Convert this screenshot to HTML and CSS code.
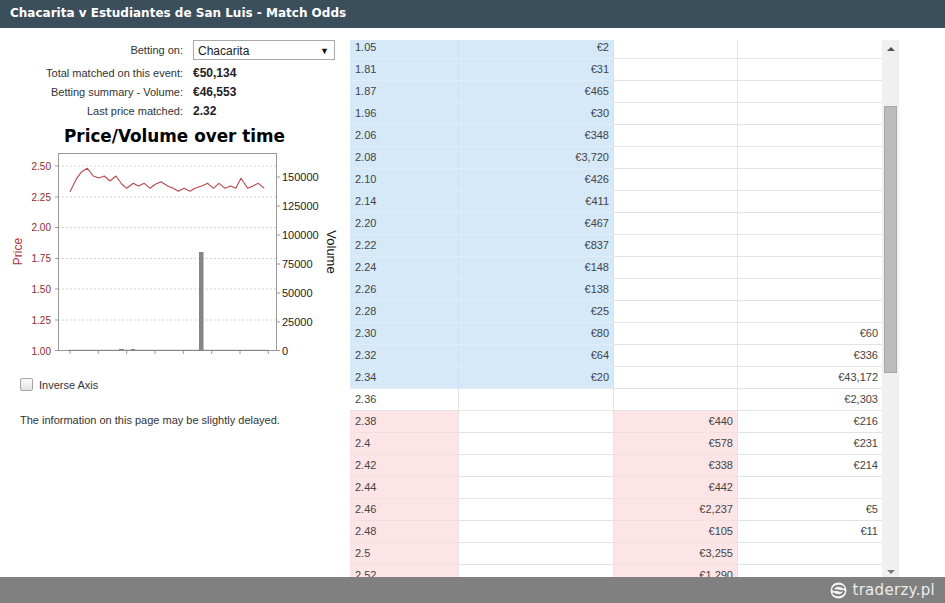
FILE: index.html
```html
<!DOCTYPE html>
<html lang="en">
<head>
<meta charset="utf-8">
<title>Match Odds</title>
<link rel="stylesheet" href="styles.css">
</head>
<body>
<header class="titlebar">Chacarita v Estudiantes de San Luis - Match Odds</header>
<main class="content">
  <section class="left">
    <div class="info">
      <span class="label first">Betting on:</span>
      <div class="select"><span>Chacarita</span><span class="caret">&#9660;</span></div>
      <span class="label">Total matched on this event:</span><span class="value">€50,134</span>
      <span class="label">Betting summary - Volume:</span><span class="value">€46,553</span>
      <span class="label">Last price matched:</span><span class="value">2.32</span>
    </div>
    <svg class="chart" width="350" height="240" viewBox="0 122 350 240" xmlns="http://www.w3.org/2000/svg">
      <text class="chart-title" x="174.5" y="142" text-anchor="middle" textLength="221" lengthAdjust="spacingAndGlyphs">Price/Volume over time</text>
      <g class="grid">
        <line x1="58" y1="166" x2="277" y2="166"/>
        <line x1="58" y1="197" x2="277" y2="197"/>
        <line x1="58" y1="227.5" x2="277" y2="227.5"/>
        <line x1="58" y1="258.5" x2="277" y2="258.5"/>
        <line x1="58" y1="289" x2="277" y2="289"/>
        <line x1="58" y1="320" x2="277" y2="320"/>
      </g>
      <rect class="plot" x="58.5" y="153.5" width="218" height="197"/>
      <g class="ticks">
        <line x1="55" y1="166" x2="58" y2="166"/><line x1="55" y1="197" x2="58" y2="197"/>
        <line x1="55" y1="227.5" x2="58" y2="227.5"/><line x1="55" y1="258.5" x2="58" y2="258.5"/>
        <line x1="55" y1="289" x2="58" y2="289"/><line x1="55" y1="320" x2="58" y2="320"/>
        <line x1="55" y1="350.5" x2="58" y2="350.5"/>
        <line x1="277" y1="177" x2="280" y2="177"/><line x1="277" y1="206" x2="280" y2="206"/>
        <line x1="277" y1="235" x2="280" y2="235"/><line x1="277" y1="264" x2="280" y2="264"/>
        <line x1="277" y1="293" x2="280" y2="293"/><line x1="277" y1="322" x2="280" y2="322"/>
        <line x1="277" y1="350.5" x2="280" y2="350.5"/>
        <line x1="70" y1="351" x2="70" y2="354"/><line x1="98.3" y1="351" x2="98.3" y2="354"/>
        <line x1="126.7" y1="351" x2="126.7" y2="354"/><line x1="155" y1="351" x2="155" y2="354"/>
        <line x1="183.3" y1="351" x2="183.3" y2="354"/><line x1="211.7" y1="351" x2="211.7" y2="354"/>
        <line x1="240" y1="351" x2="240" y2="354"/><line x1="268.3" y1="351" x2="268.3" y2="354"/>
      </g>
      <g class="price-labels" text-anchor="end">
        <text x="51" y="169.5">2.50</text>
        <text x="51" y="200.5">2.25</text>
        <text x="51" y="231">2.00</text>
        <text x="51" y="262">1.75</text>
        <text x="51" y="292.5">1.50</text>
        <text x="51" y="323.5">1.25</text>
        <text x="51" y="354.5">1.00</text>
      </g>
      <g class="volume-labels">
        <text x="282" y="181">150000</text>
        <text x="282" y="210">125000</text>
        <text x="282" y="239">100000</text>
        <text x="282" y="268">75000</text>
        <text x="282" y="297">50000</text>
        <text x="282" y="326">25000</text>
        <text x="282" y="355">0</text>
      </g>
      <text class="axis-price" transform="translate(22 251.5) rotate(-90)" text-anchor="middle">Price</text>
      <text class="axis-volume" transform="translate(327 252) rotate(90)" text-anchor="middle">Volume</text>
      <g class="bars">
        <rect x="68" y="349.8" width="200" height="1.2"/>
        <rect x="119" y="349" width="5" height="2"/>
        <rect x="131" y="349" width="4" height="2"/>
        <rect x="199" y="252" width="4.5" height="99"/>
      </g>
      <polyline class="price-line" points="70,191.7 76.7,178.3 81.7,171.7 87.3,168.3 93.3,176 99,178 104.3,176 110,181 116,176 121.7,184 126.7,188.3 133.3,183.3 138.3,186 144.3,183.3 150,188.3 155.7,184 161,181.7 167.7,186 173.3,188.3 178.3,191.3 184,188.3 190,191.3 195,188.3 201.7,186 207.7,183.3 213.3,188.3 219,183.3 225,188.3 230.7,186 235.7,188.3 241,178.3 247.7,188.3 253,186 258.3,183.3 264.3,188.3"/>
    </svg>
    <label class="inverse"><span class="checkbox"></span>Inverse Axis</label>
    <p class="note">The information on this page may be slightly delayed.</p>
  </section>

  <section class="ladder">
    <div class="viewport">
      <table class="odds">
        <colgroup><col class="c1"><col class="c2"><col class="c3"><col class="c4"></colgroup>
        <tbody>
          <tr class="back"><td>1.05</td><td class="num">€2</td><td></td><td></td></tr>
          <tr class="back"><td>1.81</td><td class="num">€31</td><td></td><td></td></tr>
          <tr class="back"><td>1.87</td><td class="num">€465</td><td></td><td></td></tr>
          <tr class="back"><td>1.96</td><td class="num">€30</td><td></td><td></td></tr>
          <tr class="back"><td>2.06</td><td class="num">€348</td><td></td><td></td></tr>
          <tr class="back"><td>2.08</td><td class="num">€3,720</td><td></td><td></td></tr>
          <tr class="back"><td>2.10</td><td class="num">€426</td><td></td><td></td></tr>
          <tr class="back"><td>2.14</td><td class="num">€411</td><td></td><td></td></tr>
          <tr class="back"><td>2.20</td><td class="num">€467</td><td></td><td></td></tr>
          <tr class="back"><td>2.22</td><td class="num">€837</td><td></td><td></td></tr>
          <tr class="back"><td>2.24</td><td class="num">€148</td><td></td><td></td></tr>
          <tr class="back"><td>2.26</td><td class="num">€138</td><td></td><td></td></tr>
          <tr class="back"><td>2.28</td><td class="num">€25</td><td></td><td></td></tr>
          <tr class="back"><td>2.30</td><td class="num">€80</td><td></td><td class="num">€60</td></tr>
          <tr class="back"><td>2.32</td><td class="num">€64</td><td></td><td class="num">€336</td></tr>
          <tr class="back"><td>2.34</td><td class="num">€20</td><td></td><td class="num">€43,172</td></tr>
          <tr class="mid"><td>2.36</td><td></td><td></td><td class="num">€2,303</td></tr>
          <tr class="lay"><td>2.38</td><td></td><td class="num">€440</td><td class="num">€216</td></tr>
          <tr class="lay"><td>2.4</td><td></td><td class="num">€578</td><td class="num">€231</td></tr>
          <tr class="lay"><td>2.42</td><td></td><td class="num">€338</td><td class="num">€214</td></tr>
          <tr class="lay"><td>2.44</td><td></td><td class="num">€442</td><td></td></tr>
          <tr class="lay"><td>2.46</td><td></td><td class="num">€2,237</td><td class="num">€5</td></tr>
          <tr class="lay"><td>2.48</td><td></td><td class="num">€105</td><td class="num">€11</td></tr>
          <tr class="lay"><td>2.5</td><td></td><td class="num">€3,255</td><td></td></tr>
          <tr class="lay"><td>2.52</td><td></td><td class="num">€1,290</td><td></td></tr>
        </tbody>
      </table>
    </div>
    <div class="scrollbar">
      <div class="sb-btn"><span class="arrow-up"></span></div>
      <div class="sb-track"><div class="sb-thumb"></div></div>
      <div class="sb-btn"><span class="arrow-down"></span></div>
    </div>
  </section>
</main>

<div class="watermark">
  <svg class="wm-logo" width="17" height="17" viewBox="0 0 17 17" xmlns="http://www.w3.org/2000/svg">
    <circle cx="8.5" cy="8.5" r="8" fill="#f2f2f2"/>
    <path d="M3 7.5 C4 3.5, 10 2.5, 13.5 5.5" fill="none" stroke="#7a7a7a" stroke-width="1.8" stroke-linecap="round"/>
    <path d="M14 9.5 C13 13.5, 7 14.5, 3.5 11.5" fill="none" stroke="#7a7a7a" stroke-width="1.8" stroke-linecap="round"/>
    <path d="M4 8.5 C6 6.5, 11 10.5, 13 8.5" fill="none" stroke="#7a7a7a" stroke-width="1.5" stroke-linecap="round"/>
  </svg>
  <span class="wm-text">traderzy.pl</span>
</div>
</body>
</html>
```

FILE: styles.css
```css
html, body {
  margin: 0;
  padding: 0;
}
body {
  width: 945px;
  height: 603px;
  overflow: hidden;
  position: relative;
  background: #ffffff;
  font-family: "Liberation Sans", Arial, sans-serif;
  font-size: 11px;
  color: #333333;
}

.titlebar {
  height: 28px;
  box-sizing: border-box;
  background: #3b4e5c;
  color: #ffffff;
  font-family: "DejaVu Sans", Verdana, sans-serif;
  font-weight: bold;
  font-size: 12px;
  line-height: 27px;
  padding-left: 10px;
}

.content {
  display: flex;
  padding-top: 12px;
}

/* left panel */
.left {
  width: 350px;
  flex: none;
}
.info {
  display: grid;
  grid-template-columns: 183px 142px;
  column-gap: 10px;
  grid-template-rows: 20px 23px 19px 19px;
  align-items: end;
}
.label {
  text-align: right;
  line-height: 19px;
  color: #333;
}
.label.first {
  align-self: center;
  padding-top: 1px;
}
.value {
  font-weight: bold;
  font-size: 12px;
  line-height: 19px;
  color: #222;
}
.select {
  align-self: stretch;
  box-sizing: border-box;
  border: 1px solid #a9a9a9;
  background: #ffffff;
  display: flex;
  align-items: center;
  justify-content: space-between;
  padding: 1px 5px 0 4px;
  font-size: 12px;
  color: #222;
}
.caret {
  font-size: 9px;
  color: #111;
}

.chart {
  display: block;
  margin-top: 1px;
}
.chart-title {
  font-family: "DejaVu Sans", Verdana, sans-serif;
  font-weight: bold;
  font-size: 17px;
  fill: #000;
}
.grid line {
  stroke: #d4d4d4;
  stroke-width: 1;
  stroke-dasharray: 2 2;
}
.plot {
  fill: none;
  stroke: #9a9a9a;
  stroke-width: 1;
}
.ticks line {
  stroke: #9a9a9a;
  stroke-width: 1;
}
.price-labels text {
  font-family: "Liberation Sans", Arial, sans-serif;
  font-size: 10px;
  fill: #8e2b2b;
}
.volume-labels text {
  font-family: "Liberation Sans", Arial, sans-serif;
  font-size: 11px;
  fill: #222;
}
.axis-price {
  font-family: "Liberation Sans", Arial, sans-serif;
  font-size: 12px;
  fill: #b03434;
}
.axis-volume {
  font-family: "Liberation Sans", Arial, sans-serif;
  font-size: 13px;
  fill: #111;
}
.bars rect {
  fill: #858585;
}
.price-line {
  fill: none;
  stroke: #b5474b;
  stroke-width: 1.1;
  stroke-linejoin: round;
}

.inverse {
  display: flex;
  align-items: center;
  gap: 6px;
  margin: 16px 0 0 20px;
  height: 13px;
  color: #333;
}
.checkbox {
  width: 11px;
  height: 11px;
  border: 1px solid #a6a6a6;
  border-radius: 2px;
  background: linear-gradient(#fafafa, #e3e3e3);
}
.note {
  margin: 22px 0 0 20px;
  line-height: 14px;
  color: #333;
}

/* ladder */
.ladder {
  display: flex;
  height: 540px;
}
.viewport {
  width: 532px;
  height: 540px;
  overflow: hidden;
}
.odds {
  margin-top: -3px;
  width: 532px;
  table-layout: fixed;
  border-collapse: separate;
  border-spacing: 0;
  color: #444;
}
.c1 { width: 109px; }
.c2 { width: 155px; }
.c3 { width: 124px; }
.c4 { width: 144px; }
.odds td {
  padding: 0 5px 0 5px;
  line-height: 21px;
  height: 21px;
  border-bottom: 1px solid #e3e3e3;
  border-right: 1px solid #e3e3e3;
  white-space: nowrap;
  overflow: hidden;
}
.odds td:last-child {
  border-right: none;
}
.odds td.num {
  text-align: right;
  padding-right: 4px;
}
.back td:nth-child(-n+2) {
  background: #d6e9f9;
  border-bottom-color: #e0ecf8;
  border-right-color: #d0e3f4;
}
.lay td:nth-child(1),
.lay td:nth-child(3) {
  background: #fde4e6;
  border-bottom-color: #f0e0e2;
}

.scrollbar {
  width: 17px;
  height: 540px;
  background: #f0f0f0;
  display: flex;
  flex-direction: column;
}
.sb-btn {
  height: 17px;
  flex: none;
  display: flex;
  align-items: center;
  justify-content: center;
}
.arrow-up {
  width: 0;
  height: 0;
  border-left: 4px solid transparent;
  border-right: 4px solid transparent;
  border-bottom: 4px solid #505050;
}
.arrow-down {
  width: 0;
  height: 0;
  border-left: 4px solid transparent;
  border-right: 4px solid transparent;
  border-top: 4px solid #7a7a7a;
}
.sb-track {
  flex: 1;
}
.sb-thumb {
  margin: 49px 0 0 2px;
  width: 11px;
  height: 265px;
  background: #bcbcbc;
  border: 1px solid #a9a9a9;
}

/* watermark overlay */
.watermark {
  position: absolute;
  left: 0;
  bottom: 0;
  width: 945px;
  height: 26px;
  box-sizing: border-box;
  background: #808080;
  display: flex;
  align-items: center;
  justify-content: flex-end;
  gap: 5px;
  padding-right: 10px;
}
.wm-logo {
  display: block;
}
.wm-text {
  font-family: "DejaVu Sans", Verdana, sans-serif;
  font-size: 15px;
  letter-spacing: 0.3px;
  color: #ececec;
}
```
